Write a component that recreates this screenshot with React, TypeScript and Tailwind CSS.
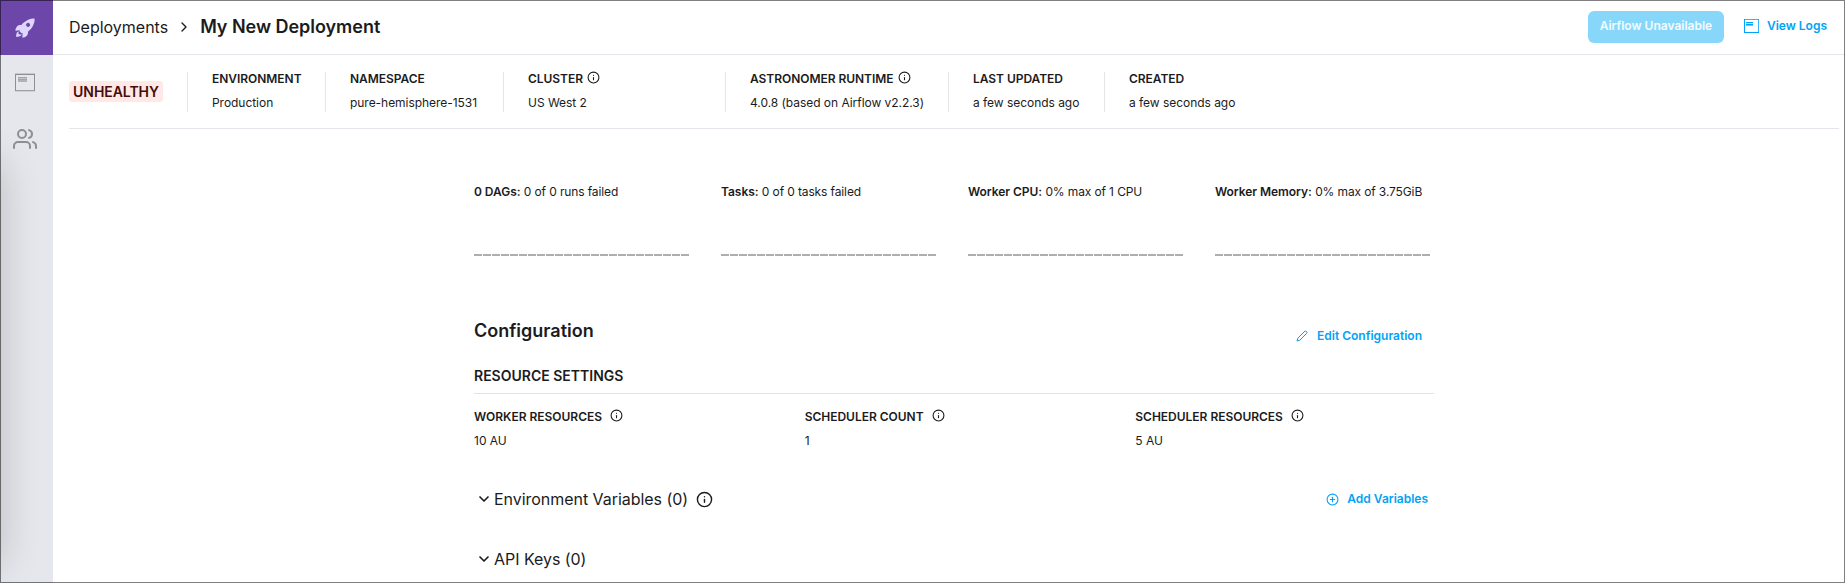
import type { ReactNode } from "react";
import { ChevronDown, ChevronRight, CirclePlus, Info } from "lucide-react";
import { FiEdit2, FiUsers } from "react-icons/fi";
import { IoRocketSharp } from "react-icons/io5";

function LogIcon({ className }: { className: string }) {
  return (
    <svg viewBox="0 0 20 19" className={className} fill="currentColor" shapeRendering="crispEdges">
      <rect x="0" y="0" width="20" height="1" opacity="0.35" />
      <rect x="0" y="1" width="20" height="1" />
      <rect x="0" y="1" width="1" height="17" />
      <rect x="19" y="1" width="1" height="17" />
      <rect x="0" y="17" width="20" height="1" opacity="0.8" />
      <rect x="0" y="18" width="20" height="1" opacity="0.25" />
      <rect x="3" y="4" width="9" height="1" opacity="0.75" />
      <rect x="3" y="5" width="9" height="1" opacity="0.4" />
      <rect x="3" y="6" width="9" height="1" opacity="0.75" />
      <rect x="3" y="7" width="9" height="2" opacity="0.6" />
    </svg>
  );
}

function SmallLogIcon() {
  return (
    <svg viewBox="0 0 15 14" className="h-[14px] w-[15px]" fill="currentColor" shapeRendering="crispEdges">
      <rect x="0" y="0" width="15" height="1" opacity="0.8" />
      <rect x="0" y="0" width="1" height="14" />
      <rect x="14" y="0" width="1" height="14" opacity="0.8" />
      <rect x="0" y="13" width="15" height="1" />
      <rect x="2" y="3" width="7" height="1" />
      <rect x="2" y="4" width="7" height="1" opacity="0.35" />
      <rect x="2" y="5" width="7" height="1" />
      <rect x="2" y="6" width="7" height="1" opacity="0.6" />
    </svg>
  );
}

function InfoDot() {
  return <Info className="size-[13px] -translate-y-[2px]" strokeWidth={2} />;
}

type Meta = { label: string; value: string; width: string; info?: boolean };

const meta: Meta[] = [
  { label: "ENVIRONMENT", value: "Production", width: "w-[138px]" },
  { label: "NAMESPACE", value: "pure-hemisphere-1531", width: "w-[178px]" },
  { label: "CLUSTER", value: "US West 2", width: "w-[222px]", info: true },
  { label: "ASTRONOMER RUNTIME", value: "4.0.8 (based on Airflow v2.2.3)", width: "w-[223px]", info: true },
  { label: "LAST UPDATED", value: "a few seconds ago", width: "w-[156px]" },
  { label: "CREATED", value: "a few seconds ago", width: "w-[156px]" },
];

const metrics = [
  { label: "0 DAGs:", value: "0 of 0 runs failed" },
  { label: "Tasks:", value: "0 of 0 tasks failed" },
  { label: "Worker CPU:", value: "0% max of 1 CPU" },
  { label: "Worker Memory:", value: "0% max of 3.75GiB" },
];

const resources = [
  { label: "WORKER RESOURCES", value: "10 AU" },
  { label: "SCHEDULER COUNT", value: "1" },
  { label: "SCHEDULER RESOURCES", value: "5 AU" },
];

function Action({ icon, children }: { icon: ReactNode; children: ReactNode }) {
  return (
    <button className="flex items-center gap-2 text-[12px] leading-4 font-semibold text-[#00a3f5]">
      {icon}
      {children}
    </button>
  );
}

export default function App() {
  return (
    <div className="relative flex h-[583px] w-[1845px] overflow-hidden bg-white font-['Inter',sans-serif] text-[12px] leading-4 text-[#1b1b1d]">
      <aside className="relative flex w-[53px] shrink-0 flex-col items-center overflow-hidden bg-[#e5e7ec]">
        <div className="flex h-[55px] w-full items-center justify-center bg-[#6c47a9]">
          <IoRocketSharp className="mr-[3px] size-[22px] text-[#dfd6ff]" />
        </div>
        <LogIcon className="mt-[18px] mr-[3px] h-[19px] w-5 text-[#8d8f93]" />
        <FiUsers className="mt-[35px] mr-[3px] size-6 text-[#8d8f93]" />
        <div className="absolute top-[162px] -left-10 h-[402px] w-10 shadow-[0_0_40px_rgba(0,0,0,0.2)]" />
      </aside>

      <main className="flex min-w-0 flex-1 flex-col">
        <header className="flex h-[55px] shrink-0 items-center justify-between border-b border-[#e5e5ec] pr-[18px] pl-4">
          <nav className="flex items-center">
            <span className="text-[16px] leading-6">Deployments</span>
            <ChevronRight className="mx-2 size-4" strokeWidth={2} />
            <h1 className="text-[18px] leading-6 font-semibold tracking-[-0.03px]">My New Deployment</h1>
          </nav>
          <div className="flex items-center gap-5">
            <button className="h-8 w-[136px] rounded-[6px] bg-[#87d7fb] pb-[2px] text-[12px] font-semibold text-white/90">
              Airflow Unavailable
            </button>
            <div className="mb-[2px]">
              <Action icon={<SmallLogIcon />}>View Logs</Action>
            </div>
          </div>
        </header>

        <section className="mr-[6px] ml-4 flex h-[74px] shrink-0 border-b border-[#e5e5ec] pt-[17px]">
          <div className="w-[118px]">
            <span className="mt-[9px] flex h-[21px] w-[94px] items-center justify-center rounded-[3px] bg-[#ffe8e5] text-[14px] font-semibold tracking-[-0.05px] text-[#450c0a]">
              UNHEALTHY
            </span>
          </div>
          {meta.map((m) => (
            <div key={m.label} className={`${m.width} h-10 border-l border-[#e5e5ea] pl-6 tracking-[-0.04px]`}>
              <div className="-mt-px flex h-4 items-center gap-1 font-semibold whitespace-nowrap">
                {m.label}
                {m.info && <InfoDot />}
              </div>
              <div className="mt-2 whitespace-nowrap">{m.value}</div>
            </div>
          ))}
        </section>

        <div className="ml-[421px] flex w-[960px] flex-col">
          <section className="flex gap-8 pt-[55px]">
            {metrics.map((m) => (
              <div key={m.label} className="w-[215px]">
                <div className="whitespace-nowrap">
                  <span className="font-semibold tracking-[-0.05px]">{m.label}</span>{" "}
                  <span className="tracking-[-0.12px]">{m.value}</span>
                </div>
                <div className="mt-[54px] flex gap-px">
                  {Array.from({ length: 24 }, (_, i) => (
                    <div key={i} className="h-[2px] w-2 shrink-0 bg-[#aeadb2]" />
                  ))}
                </div>
              </div>
            ))}
          </section>

          <div className="mt-[62px] flex h-6 justify-between pr-3">
            <h2 className="mt-px text-[18px] leading-6 font-semibold">Configuration</h2>
            <div className="mt-[10px]">
              <Action icon={<FiEdit2 className="mr-px size-3" />}>Edit Configuration</Action>
            </div>
          </div>

          <h3 className="mt-[24px] h-[28px] border-b border-[#e4e4e6] text-[14px] leading-5 font-semibold">
            RESOURCE SETTINGS
          </h3>
          <div className="grid grid-cols-3 gap-x-8 pt-[15px]">
            {resources.map((r) => (
              <div key={r.label}>
                <div className="flex h-4 items-center gap-2 font-semibold tracking-[-0.02px]">
                  {r.label}
                  <InfoDot />
                </div>
                <div className="mt-2">{r.value}</div>
              </div>
            ))}
          </div>

          <div className="mt-[38px] flex h-6 items-center justify-between pr-[6px]">
            <div className="flex items-center text-[16px] leading-6 tracking-[-0.04px]">
              <ChevronDown className="mr-[2px] ml-[2px] size-4" strokeWidth={2.5} />
              Environment Variables (0)
              <Info className="ml-2 size-[17px]" strokeWidth={2} />
            </div>
            <Action icon={<CirclePlus className="size-[13px]" />}>Add Variables</Action>
          </div>
          <div className="mt-9 flex h-6 items-center text-[16px] leading-6 tracking-[-0.04px]">
            <ChevronDown className="mr-[2px] ml-[2px] size-4" strokeWidth={2.5} />
            API Keys (0)
          </div>
        </div>
      </main>
      <div className="pointer-events-none absolute inset-0 border border-black/50" />
    </div>
  );
}
